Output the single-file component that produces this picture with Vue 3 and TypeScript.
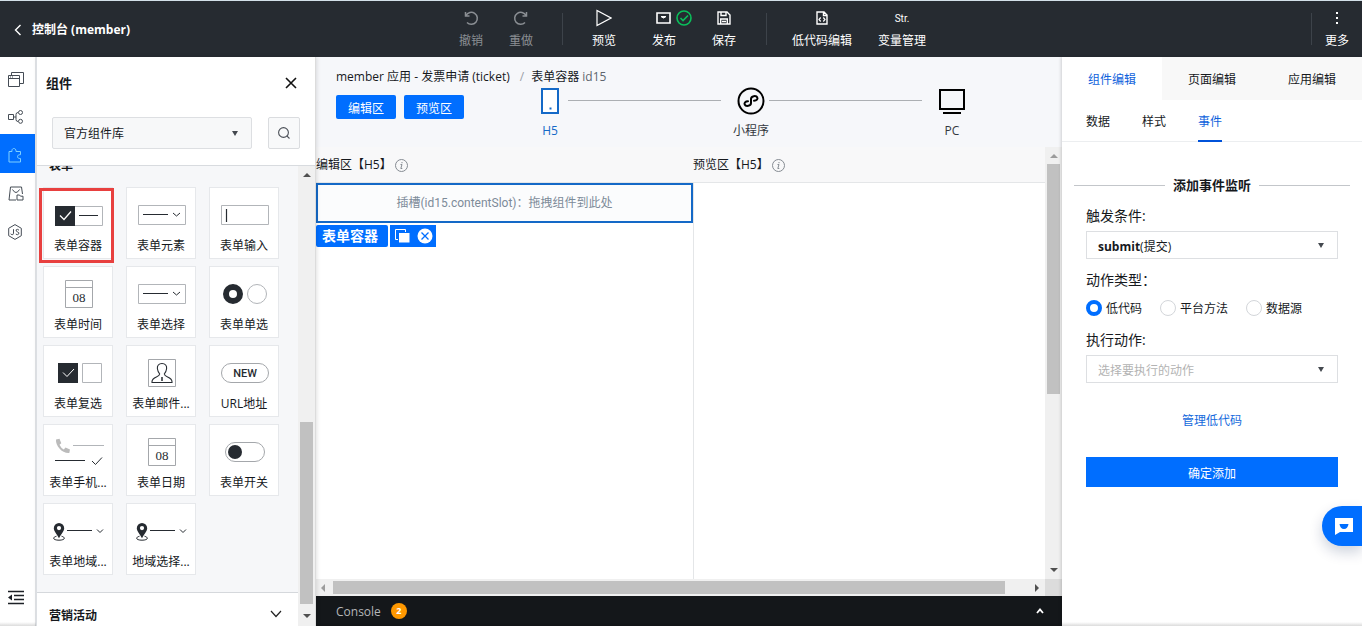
<script setup lang="ts">
import { ref } from 'vue'

interface Widget {
  kind: string
  label: string
}

const widgets: Widget[] = [
  { kind: 'container', label: '表单容器' },
  { kind: 'select', label: '表单元素' },
  { kind: 'input', label: '表单输入' },
  { kind: 'date', label: '表单时间' },
  { kind: 'select', label: '表单选择' },
  { kind: 'radio', label: '表单单选' },
  { kind: 'checkbox', label: '表单复选' },
  { kind: 'mail', label: '表单邮件...' },
  { kind: 'url', label: 'URL地址' },
  { kind: 'phone', label: '表单手机...' },
  { kind: 'date', label: '表单日期' },
  { kind: 'switch', label: '表单开关' },
  { kind: 'region', label: '表单地域...' },
  { kind: 'region', label: '地域选择...' },
]

const panelTabs: string[] = ['组件编辑', '页面编辑', '应用编辑']
const subTabs: string[] = ['数据', '样式', '事件']
const actionTypes: string[] = ['低代码', '平台方法', '数据源']

const activePanel = ref('组件编辑')
const activeSub = ref('事件')
const actionType = ref('低代码')
const library = ref('官方组件库')
const trigger = ref('submit')
const action = ref('')
</script>

<template>
  <div class="app">
    <header class="topbar">
      <button class="back" type="button">
        <svg width="8" height="12" viewBox="0 0 8 12"><path d="M6.500 1L1.500 6l5 5" fill="none" stroke="#fff" stroke-width="1.400" /></svg>
        <span>控制台 (member)</span>
      </button>
      <nav class="tools">
        <button class="tool dim" type="button">
          <svg width="16" height="16" viewBox="0 0 16 16" fill="none" stroke="currentColor" stroke-width="1.500"><path d="M2.500 2v4h4M3 5.500A6 6 0 1 1 4 12.500" /></svg>
          <span>撤销</span>
        </button>
        <button class="tool dim" type="button">
          <svg width="16" height="16" viewBox="0 0 16 16" fill="none" stroke="currentColor" stroke-width="1.500"><path d="M13.500 2v4h-4M13 5.500A6 6 0 1 0 12 12.500" /></svg>
          <span>重做</span>
        </button>
        <i class="sep wide-left"></i>
        <button class="tool mid" type="button">
          <svg width="16" height="18" viewBox="0 0 16 18" fill="none" stroke="currentColor" stroke-width="1.200"><path d="M1 1.500v15L15 9z" /></svg>
          <span>预览</span>
        </button>
        <button class="tool mid" type="button">
          <svg class="publish" width="36" height="16" viewBox="0 0 36 16" fill="none">
            <path d="M1 3h13v10H1z" stroke="#fff" stroke-width="1.600" />
            <path d="M5 6.500q2.500 3 5 0z" fill="#fff" stroke="#fff" />
            <circle cx="28" cy="8" r="7" stroke="#0abf5b" stroke-width="1.600" />
            <path d="M24.500 8l2.500 2.500L32 5.500" stroke="#0abf5b" stroke-width="1.600" />
          </svg>
          <span>发布</span>
        </button>
        <button class="tool mid" type="button">
          <svg width="14" height="14" viewBox="0 0 14 14" fill="none" stroke="currentColor" stroke-width="1.400"><path d="M1 1h9l3 3v9H1zM4 1v3.500h5V1M3.700 13V8h6.600v5M5 10.500h4" /></svg>
          <span>保存</span>
        </button>
        <i class="sep wide-right"></i>
        <button class="tool big" type="button">
          <svg width="12" height="14" viewBox="0 0 12 14" fill="none" stroke="currentColor" stroke-width="1.400"><path d="M1 1h7l3 3v9H1zM7.500 1v3.500H11" /><path d="M4.700 6.500L3 8.500l1.700 2M7.300 6.500L9 8.500l-1.700 2" stroke-width="1.200" /></svg>
          <span>低代码编辑</span>
        </button>
        <button class="tool big" type="button">
          <b class="str">Str.</b>
          <span>变量管理</span>
        </button>
      </nav>
      <div class="more-wrap">
        <i class="sep"></i>
        <button class="tool more" type="button">
          <svg width="4" height="14" viewBox="0 0 4 14" fill="#fff"><path d="M1 1h2v2H1zM1 6h2v2H1zM1 11h2v2H1z" /></svg>
          <span>更多</span>
        </button>
      </div>
    </header>

    <div class="body">
      <nav class="rail">
        <button type="button" aria-label="页面">
          <svg width="16" height="16" viewBox="0 0 16 16" fill="none" stroke="#454c55"><path d="M.5 4.500h11v11H.5zM.5 7.500h11M3.500 4.500v-3h12v11h-3.500M2 6h1M4 6h1" /></svg>
        </button>
        <button type="button" aria-label="流程">
          <svg width="16" height="14" viewBox="0 0 16 14" fill="none" stroke="#454c55"><path d="M.5 4.500h5v5h-5zM5.500 7h2.500M10 2.500Q8 2.500 8 4.500v5q0 2 2 2" /><circle cx="12.500" cy="2.500" r="2" /><circle cx="12.500" cy="11.300" r="2" /></svg>
        </button>
        <button class="active" type="button" aria-label="组件">
          <svg width="14" height="16" viewBox="0 0 14 16" fill="none" stroke="#7fd0ff"><path d="M1 4.500h3c-.8-4 4.500-4 4 0h4.500v3.200c-4-.5-4 4.300 0 3.800v3.500H1z" /></svg>
        </button>
        <button type="button" aria-label="素材">
          <svg width="16" height="15" viewBox="0 0 16 15" fill="none" stroke="#454c55"><path d="M8 14H1L2.500 1h11l1 7M4.500 3.500q3.500 6 7 0M9 14V9h2.500l1 1.200H15V14z" /></svg>
        </button>
        <button type="button" aria-label="脚本">
          <svg width="14" height="16" viewBox="0 0 14 16" fill="none" stroke="#454c55"><path d="M7 .6l6.300 3.700v7.400L7 15.400.7 11.700V4.300z" /><path d="M5.500 5.200v4q0 1.500-1.300 1.500-1.200 0-1.400-1M11 6.200Q9.500 4.700 8.200 5.800q-.7 1.300 1.200 2 2 .6 1.400 2.100-1.200 1.500-3 .2" /></svg>
        </button>
        <button class="collapse" type="button" aria-label="收起">
          <svg width="17" height="15" viewBox="0 0 17 15"><path d="M0 1.500h16M6 5.500h10M6 9.500h10M0 13.500h16" stroke="#1c2026" stroke-width="1.600" /><path d="M4 4.500v6L0 7.500z" fill="#1c2026" /></svg>
        </button>
      </nav>

      <aside class="library">
        <div class="lib-head">
          <div class="lib-title">
            <h2>组件</h2>
            <button type="button" aria-label="关闭">
              <svg width="12" height="12" viewBox="0 0 12 12"><path d="M1 1l10 10M11 1L1 11" stroke="#111" stroke-width="1.600" /></svg>
            </button>
          </div>
          <div class="lib-filter">
            <div class="pick grey">
              <select v-model="library" aria-label="组件库"><option>官方组件库</option></select>
              <i class="caret"></i>
            </div>
            <button type="button" aria-label="搜索">
              <svg width="12" height="12" viewBox="0 0 12 12" fill="none" stroke="#4b5058" stroke-width="1.100"><circle cx="5.500" cy="5.500" r="4.900" /><path d="M8.800 8.800l2.700 2.700" /></svg>
            </button>
          </div>
        </div>

        <div class="lib-scroll">
          <div class="lib-list">
            <section class="group">
              <h3>表单</h3>
              <div class="cards">
                <button v-for="(w, i) in widgets" :key="i" class="card" :class="{ marked: i === 0 }" type="button">
                  <svg width="70" height="50" viewBox="0 0 70 50" fill="none" stroke="#262b31">
                    <template v-if="w.kind === 'container'">
                      <path d="M32 19.500h27.500v19H32" stroke="#b2b5b9" />
                      <path d="M12 19h20v20H12z" fill="#262b31" stroke="none" />
                      <path d="M17 28.500l4 4 7-8" stroke="#fff" stroke-width="1.300" />
                      <path d="M36 28.500h19" />
                    </template>
                    <template v-else-if="w.kind === 'select'">
                      <path d="M12.500 18.500h47v19h-47z" stroke="#b2b5b9" />
                      <path d="M17 27.500h25M47 26l3.500 3 3.500-3" />
                    </template>
                    <template v-else-if="w.kind === 'input'">
                      <path d="M12.500 18.500h47v19h-47z" stroke="#b2b5b9" />
                      <path d="M17.500 22v13" stroke-width="1.200" />
                    </template>
                    <template v-else-if="w.kind === 'date'">
                      <path d="M22.500 14.500h27v27h-27zM22.500 21.500h27" stroke="#a4a7ab" />
                      <text x="36" y="36" class="day">08</text>
                    </template>
                    <template v-else-if="w.kind === 'radio'">
                      <circle cx="24" cy="28" r="7" stroke-width="6" />
                      <circle cx="48" cy="28" r="9.500" stroke="#b2b5b9" />
                    </template>
                    <template v-else-if="w.kind === 'checkbox'">
                      <path d="M15 18h20v20H15z" fill="#262b31" stroke="none" />
                      <path d="M20 27.500l4 4 7-7.500" stroke="#fff" />
                      <path d="M39.500 18.500h19v19h-19z" stroke="#b2b5b9" />
                    </template>
                    <template v-else-if="w.kind === 'mail'">
                      <path d="M22.500 14.500h27v27h-27z" stroke="#a4a7ab" />
                      <path d="M36 18.500c3.300 0 5 2.300 4.600 5.200-.3 2.600-1.300 4-2.300 5.300.2 3.700 7.700 2.200 7.700 7.800v.7H26v-.7c0-5.600 7.500-4.100 7.700-7.800-1-1.300-2-2.700-2.300-5.300-.4-2.900 1.300-5.200 4.600-5.200z" stroke-width="1.100" />
                      <path d="M36 32v4" stroke-width="1.500" />
                    </template>
                    <template v-else-if="w.kind === 'url'">
                      <rect x="12.500" y="18.500" width="47" height="19" rx="9.500" stroke="#a4a7ab" />
                      <text x="36" y="32" class="new">NEW</text>
                    </template>
                    <template v-else-if="w.kind === 'phone'">
                      <path d="M13 15.500l3.500-.8 1.800 4.500-1.800 1.500q1.500 3.300 4.300 4.800l1.700-2 4.500 2-.7 3.500C19 29.500 12.500 22 13 15.500z" fill="#bbb" stroke="none" />
                      <path d="M30 21.500h31" stroke="#b2b5b9" />
                      <path d="M12 36.500h30" />
                      <path d="M49 37l3.500 3.500 6.500-7" />
                    </template>
                    <template v-else-if="w.kind === 'switch'">
                      <rect x="16.500" y="18.500" width="39" height="19" rx="9.500" stroke="#a4a7ab" />
                      <circle cx="26" cy="28" r="7" fill="#262b31" stroke="none" />
                    </template>
                    <template v-else>
                      <path d="M13.500 33.200c-5 1.500-3 4 2.500 4s7.500-2.500 2.500-4" />
                      <path d="M16 20a5.200 5.200 0 0 1 5.200 5.200c0 3-3 5.500-5.200 10-2.200-4.500-5.200-7-5.200-10A5.200 5.200 0 0 1 16 20zm0 3a2.100 2.100 0 1 0 0 4.200 2.100 2.100 0 1 0 0-4.200z" fill="#262b31" stroke="none" />
                      <path d="M24 27.500h25M54 26.500l3 3 3-3" />
                    </template>
                  </svg>
                  <span>{{ w.label }}</span>
                </button>
              </div>
            </section>
            <button class="group-closed" type="button">
              <span>营销活动</span>
              <svg width="12" height="8" viewBox="0 0 12 8"><path d="M1 1l5 5.500L11 1" fill="none" stroke="#222" stroke-width="1.200" /></svg>
            </button>
          </div>
          <div class="vbar lib-bar">
            <i class="arrow up"></i>
            <i class="thumb"></i>
            <i class="arrow down"></i>
          </div>
        </div>
      </aside>

      <main class="stage">
        <div class="stage-head">
          <div class="crumbs">
            <span>member 应用 - 发票申请 (ticket)</span>
            <i>/</i>
            <span>表单容器 <em>id15</em></span>
          </div>
          <div class="stage-row">
            <div class="areas">
              <button type="button">编辑区</button>
              <button type="button">预览区</button>
            </div>
            <div class="steps">
              <button class="step on" type="button">
                <svg width="28" height="28" viewBox="0 0 28 28"><path d="M6 2h16v24H6z" fill="#fff" stroke="#1469c7" stroke-width="2" /><path d="M13.500 20.500h2v2h-2z" fill="#1469c7" /></svg>
                <span>H5</span>
              </button>
              <i class="line"></i>
              <button class="step" type="button">
                <svg width="28" height="28" viewBox="0 0 28 28" fill="none" stroke="#000" stroke-width="2"><circle cx="14" cy="14" r="12.500" /><path d="M11 14.300c-2.800 0-4 1.700-3.300 3.200 1 2.300 6.300 1.800 6.300-1.500v-4c0-3.300 5.300-3.800 6.300-1.500.7 1.500-.5 3.200-3.300 3.200" stroke-linecap="round" /></svg>
                <span>小程序</span>
              </button>
              <i class="line"></i>
              <button class="step" type="button">
                <svg width="28" height="28" viewBox="0 0 28 28" fill="none" stroke="#000" stroke-width="2"><path d="M2 3h24v19H2zM5 26h18" /></svg>
                <span>PC</span>
              </button>
            </div>
          </div>
        </div>

        <div class="view">
          <div class="panes">
            <section class="pane">
              <div class="pane-title">
                <span>编辑区【H5】</span>
                <svg width="13" height="13" viewBox="0 0 13 13" fill="none" stroke="#858b92"><circle cx="6.500" cy="6.500" r="6" /><path d="M5.500 5.500h1.500l-1.200 4h1.500M7 3v1.200" /></svg>
              </div>
              <div class="sheet">
                <div class="slot">插槽(id15.contentSlot)：拖拽组件到此处</div>
                <div class="slot-bar">
                  <b>表单容器</b>
                  <div class="slot-acts">
                    <button type="button" aria-label="复制">
                      <svg width="15" height="14" viewBox="0 0 15 14"><path d="M10.500 3V.5H.5v10H3" fill="none" stroke="#fff" /><path d="M4 4h10.500v9.500H4z" fill="#fff" /></svg>
                    </button>
                    <button type="button" aria-label="删除">
                      <svg width="16" height="16" viewBox="0 0 16 16"><circle cx="8" cy="8" r="7.500" fill="#fff" /><path d="M4.500 4.500l7 7M11.500 4.500l-7 7" stroke="#006eff" stroke-width="1.300" /></svg>
                    </button>
                  </div>
                </div>
              </div>
            </section>
            <section class="pane second">
              <div class="pane-title">
                <span>预览区【H5】</span>
                <svg width="13" height="13" viewBox="0 0 13 13" fill="none" stroke="#858b92"><circle cx="6.500" cy="6.500" r="6" /><path d="M5.500 5.500h1.500l-1.200 4h1.500M7 3v1.200" /></svg>
              </div>
              <div class="sheet"></div>
            </section>
          </div>
          <div class="vbar view-bar">
            <i class="arrow up pale"></i>
            <i class="thumb"></i>
            <i class="arrow down"></i>
          </div>
          <div class="hbar">
            <i class="arrow left pale"></i>
            <i class="thumb"></i>
            <i class="arrow right"></i>
          </div>
          <div class="corner"></div>
        </div>

        <button class="console" type="button">
          <span>Console</span>
          <b>2</b>
          <svg width="8" height="6" viewBox="0 0 8 6"><path d="M1 5l3-3.500L7 5" fill="none" stroke="#fff" stroke-width="1.800" /></svg>
        </button>
      </main>

      <aside class="inspector">
        <div class="tabs">
          <button v-for="t in panelTabs" :key="t" type="button" :class="{ on: t === activePanel }" @click="activePanel = t">{{ t }}</button>
        </div>
        <div class="subtabs">
          <button v-for="t in subTabs" :key="t" type="button" :class="{ on: t === activeSub }" @click="activeSub = t">{{ t }}</button>
        </div>
        <h3 class="legend">添加事件监听</h3>
        <form class="form" @submit.prevent>
          <label class="name" for="trigger">触发条件:</label>
          <div class="pick">
            <select id="trigger" v-model="trigger" class="rich"><option value="submit" label="submit(提交)"></option></select>
            <span class="shown" aria-hidden="true"><b>submit</b>(提交)</span>
            <i class="caret"></i>
          </div>
          <span class="name">动作类型：</span>
          <div class="radios">
            <label v-for="a in actionTypes" :key="a">
              <input v-model="actionType" type="radio" name="action-type" :value="a">
              <span>{{ a }}</span>
            </label>
          </div>
          <label class="name" for="action">执行动作:</label>
          <div class="pick empty">
            <select id="action" v-model="action"><option value="">选择要执行的动作</option></select>
            <i class="caret"></i>
          </div>
          <a class="manage" href="#">管理低代码</a>
          <button class="confirm" type="submit">确定添加</button>
        </form>
      </aside>
    </div>

    <button class="chat" type="button" aria-label="客服">
      <svg width="18" height="17" viewBox="0 0 18 17"><path d="M0 0h18v14H5l-5 3z" fill="#fff" /><path d="M4.500 6h9q-.8 5-4.500 5t-4.500-5z" fill="#006eff" /></svg>
    </button>
  </div>
</template>

<style>
body {
  margin: 0;
  overflow: hidden;
}
</style>

<style scoped>
*,
*::before,
*::after {
  box-sizing: border-box;
}

.app {
  position: relative;
  display: flex;
  flex-direction: column;
  height: 100vh;
  overflow: hidden;
  border-top: 1px solid #d3e0e8;
  background: #fff;
  color: #16191d;
  font: 12px/20px "Open Sans", "Noto Sans CJK SC", sans-serif;
}

.app::after {
  content: "";
  position: absolute;
  right: 0;
  bottom: 0;
  left: 0;
  height: 4px;
  background: linear-gradient(rgba(0, 0, 0, 0), rgba(0, 0, 0, 0.14));
  pointer-events: none;
}

button,
select {
  margin: 0;
  padding: 0;
  border: 0;
  background: none;
  color: inherit;
  font: inherit;
}

svg {
  display: block;
  flex: none;
}

/* top bar */
.topbar {
  display: grid;
  grid-template-columns: 1fr auto 1fr;
  flex: none;
  height: 56px;
  background: #262b31;
  color: #fff;
}

.back {
  display: flex;
  align-items: center;
  justify-self: start;
  gap: 10px;
  padding: 2px 0 0 14px;
  font-weight: 700;
}

.tools {
  display: flex;
  align-items: center;
  padding-left: 26px;
}

.tool {
  display: flex;
  flex-direction: column;
  align-items: center;
  height: 56px;
  padding-top: 8px;
  width: 50px;
  white-space: nowrap;
}

.tool > svg,
.str {
  height: 18px;
}

.tool > span {
  margin-top: 4px;
}

.tool.dim {
  color: #8b8f94;
}

.tool.mid {
  width: 60px;
}

.tool.big {
  width: 80px;
}

.publish {
  margin-left: 20px;
}

.str {
  font: 400 10px/20px Roboto, sans-serif;
}

.sep {
  width: 1px;
  height: 32px;
  background: #3d434a;
}

.wide-left {
  margin: 0 11px 0 16px;
}

.wide-right {
  margin: 0 15px 0 12px;
}

.more-wrap {
  display: flex;
  align-items: center;
  justify-self: end;
}

/* body */
.body {
  display: flex;
  flex: 1;
  min-height: 0;
}

.rail {
  display: flex;
  flex: none;
  flex-direction: column;
  width: 36px;
  padding-top: 1px;
  border-right: 1px solid #e3e5e8;
}

.rail button {
  display: flex;
  align-items: center;
  height: 38px;
  padding: 3px 0 0 8px;
}

.rail .active {
  height: 39px;
  background: #006eff;
}

.rail .collapse {
  margin-top: auto;
  margin-bottom: 11px;
}

.library {
  z-index: 1;
  display: flex;
  flex: none;
  flex-direction: column;
  width: 280px;
  border-left: 1px solid #dcdfe3;
  border-right: 1px solid #dcdcdc;
  box-shadow: 1px 0 4px rgba(0, 0, 0, 0.12);
  background: #fff;
}

.lib-head {
  flex: none;
  height: 109px;
  padding: 16px 15px 0 15px;
  border-bottom: 1px solid #d8dbdf;
}

.lib-title {
  display: flex;
  align-items: center;
  justify-content: space-between;
  margin: 0 3px 0 -6px;
}

.lib-title h2 {
  margin: 0;
  font-size: 13px;
  line-height: 20px;
}

.lib-filter {
  display: flex;
  justify-content: space-between;
  gap: 16px;
  margin-top: 24px;
}

.lib-filter > button {
  display: flex;
  flex: none;
  align-items: center;
  justify-content: center;
  width: 32px;
  height: 32px;
  border: 1px solid #dadcdf;
  border-radius: 2px;
  background: #f8f9fa;
}

.pick {
  position: relative;
  display: flex;
  flex: 1;
  height: 28px;
}

.pick select {
  flex: 1;
  min-width: 0;
  padding: 4px 11px 0;
  border: 1px solid #dddfe2;
  background: #fff;
  appearance: none;
}

.pick.grey {
  height: 32px;
}

.pick.grey select {
  padding-top: 2px;
  border-radius: 2px;
  background: #f7f8f9;
}

.pick.empty select {
  color: #b3b3b3;
}

.pick select.rich {
  color: transparent;
}

.shown {
  position: absolute;
  top: 6px;
  left: 12px;
  pointer-events: none;
}

.caret {
  position: absolute;
  top: 12px;
  right: 14px;
  border: solid transparent;
  border-width: 5px 3px 0;
  border-top-color: #44494f;
  pointer-events: none;
}

.pick.grey .caret {
  top: 14px;
}

.lib-scroll {
  display: flex;
  flex: 1;
  min-height: 0;
}

.lib-list {
  flex: 1;
  min-width: 0;
  overflow: hidden;
  background: #f6f7f9;
}

.group {
  padding: 0 6px 17px;
  border-bottom: 1px solid #d5d8dc;
}

.group h3 {
  margin: -10px 0 0 6px;
  padding-bottom: 11px;
  font-size: 12px;
  line-height: 20px;
}

.cards {
  display: grid;
  grid-template-columns: repeat(3, 70px);
  gap: 7px 13px;
}

.card {
  position: relative;
  display: flex;
  flex-direction: column;
  align-items: center;
  height: 72px;
  background: #fff;
  box-shadow: inset 0 0 0 1px #e6e8eb;
  white-space: nowrap;
}

.card > span {
  margin-top: -1px;
}

.marked {
  z-index: 1;
}

.marked::after {
  content: "";
  position: absolute;
  top: 1px;
  left: -4px;
  width: 75px;
  height: 75px;
  border: 3px solid #e8403f;
}

.day {
  font: 13px "Liberation Serif", serif;
  fill: #262b31;
  stroke: none;
  text-anchor: middle;
}

.new {
  font: 500 11px Roboto, sans-serif;
  fill: #262b31;
  stroke: none;
  text-anchor: middle;
}

.group-closed {
  display: flex;
  align-items: center;
  justify-content: space-between;
  width: 100%;
  height: 45px;
  padding: 0 16px 4px 12px;
  background: #fff;
  font-weight: 700;
}

.group-closed span {
  padding-top: 4px;
}

/* drawn scroll bars */
.vbar {
  display: flex;
  flex-direction: column;
  align-items: center;
  background: #f0f0f0;
}

.thumb {
  background: #c1c1c1;
}

.arrow {
  flex: none;
  border: 4px solid transparent;
}

.arrow.up {
  border-top: 0;
  border-bottom-color: #505050;
}

.arrow.down {
  border-bottom: 0;
  border-top-color: #505050;
}

.arrow.left {
  border-left: 0;
  border-right-color: #505050;
}

.arrow.right {
  border-right: 0;
  border-left-color: #505050;
}

.arrow.up.pale {
  border-bottom-color: #9c9c9c;
}

.arrow.left.pale {
  border-right-color: #9c9c9c;
}

.lib-bar {
  flex: none;
  width: 17px;
  padding: 7px 0 8px;
}

.lib-bar .thumb {
  width: 13px;
  height: 41%;
  margin: auto 0 10px;
}

/* stage */
.stage {
  display: flex;
  flex: 1;
  flex-direction: column;
  min-width: 0;
}

.stage-head {
  flex: none;
  height: 90px;
  padding: 10px 92px 0 20px;
  background: #f6f7fa;
}

.crumbs {
  display: flex;
}

.crumbs i {
  margin: 0 7px 0 10px;
  color: #9aa0a6;
  font-style: normal;
}

.crumbs em {
  color: #5e656d;
  font-style: normal;
}

.stage-row {
  display: flex;
  gap: 68px;
}

.areas {
  display: flex;
  gap: 8px;
  padding-top: 8px;
}

.areas button {
  width: 60px;
  height: 24px;
  padding-top: 3px;
  border-radius: 2px;
  background: #006eff;
  color: #fff;
}

.steps {
  display: flex;
  flex: 1;
}

.step {
  display: flex;
  flex-direction: column;
  align-items: center;
  width: 36px;
  color: #33383e;
  white-space: nowrap;
}

.step span {
  margin-top: 6px;
}

.step.on {
  color: #1469c7;
}

.line {
  flex: 1;
  height: 1px;
  margin: 13px 12px 0 0;
  background: #acafb3;
}

.view {
  display: grid;
  grid-template-rows: 1fr 17px;
  grid-template-columns: 1fr 17px;
  flex: 1;
  min-height: 0;
}

.panes {
  display: grid;
  grid-template-columns: 377fr 352fr;
}

.pane {
  display: flex;
  flex-direction: column;
  min-width: 0;
}

.pane-title {
  display: flex;
  align-items: center;
  gap: 3px;
  height: 36px;
  padding-top: 1px;
  border-bottom: 1px solid #e4e6e8;
  background: #f8f8f9;
}

.sheet {
  flex: 1;
}

.second .sheet {
  border-left: 1px solid #e4e6e8;
}

.slot {
  display: flex;
  align-items: center;
  justify-content: center;
  height: 40px;
  border: 2px solid #1469c7;
  background: #fbfcfd;
  color: #7d8b99;
  font-family: Roboto, "Noto Sans CJK SC", sans-serif;
}

.slot-bar {
  display: flex;
  gap: 2px;
  margin-top: 2px;
  color: #fff;
}

.slot-bar b {
  padding: 1px 10px 1px 6px;
  border-radius: 2px;
  background: #006eff;
  font-size: 14px;
}

.slot-acts {
  display: flex;
  align-items: center;
  gap: 7px;
  padding: 0 3px 0 5px;
  background: #006eff;
}

.view-bar {
  padding: 7px 0;
}

.view-bar .thumb {
  width: 13px;
  height: 230px;
  margin: 6px 0 auto;
}

.hbar {
  display: flex;
  align-items: center;
  padding: 0 6px 0 5px;
  background: #f0f0f0;
}

.hbar .thumb {
  flex: 1;
  height: 13px;
  margin: 0 30px 0 8px;
}

.corner {
  background: #dcdcdc;
}

.console {
  display: flex;
  flex: none;
  align-items: center;
  height: 30px;
  padding: 0 18px 0 20px;
  background: #14171a;
  color: #b4b6b8;
}

.console span {
  padding-top: 2px;
}

.console b {
  width: 16px;
  height: 16px;
  margin: 0 auto 0 10px;
  border-radius: 50%;
  background: #ff9800;
  color: #fff;
  font-size: 9px;
  line-height: 16px;
}

/* inspector */
.inspector {
  flex: none;
  width: 300px;
  box-shadow: -1px 0 3px rgba(0, 0, 0, 0.16);
  background: #fff;
}

.tabs {
  display: flex;
}

.tabs button {
  flex: 1;
  height: 43px;
  padding-top: 2px;
  background: #f8f8f8;
}

.tabs .on {
  background: #fff;
  color: #0f62dc;
}

.subtabs {
  display: flex;
  gap: 32px;
  height: 42px;
  padding-left: 24px;
  border-bottom: 1px solid #eceef0;
}

.subtabs button {
  height: 42px;
  padding-top: 4px;
  border-bottom: 2px solid transparent;
}

.subtabs .on {
  border-color: #0052d9;
  color: #0f62dc;
}

.legend {
  display: flex;
  align-items: center;
  gap: 8px;
  margin: 33px 12px 0;
  font-size: 13px;
  line-height: 20px;
}

.legend::before,
.legend::after {
  content: "";
  flex: 1;
  height: 1px;
  background: #c3c6ca;
}

.form {
  display: flex;
  flex-direction: column;
  padding: 11px 24px 0;
}

.form .pick {
  flex: none;
}

.name {
  margin-bottom: 5px;
  font-size: 14px;
  line-height: 20px;
}

.pick + .name {
  margin-top: 11px;
}

.radios {
  display: flex;
  gap: 18px;
  height: 20px;
  margin: 3px 0 12px;
}

.radios label {
  display: flex;
  align-items: center;
  gap: 4px;
}

.radios span {
  padding-top: 2px;
}

.radios input {
  width: 16px;
  height: 16px;
  margin: 0;
  border: 1px solid #d3d6da;
  border-radius: 50%;
  appearance: none;
}

.radios input:checked {
  border: 4px solid #006eff;
}

.manage {
  align-self: center;
  margin: 28px 0 26px;
  color: #1469dc;
  text-decoration: none;
}

.confirm {
  height: 30px;
  padding-top: 4px;
  background: #006eff;
  color: #fff;
}

.chat {
  position: absolute;
  right: 0;
  bottom: 80px;
  display: flex;
  align-items: center;
  width: 40px;
  height: 40px;
  padding-left: 13px;
  border-radius: 20px 0 0 20px;
  background: #006eff;
  box-shadow: 0 6px 14px rgba(0, 30, 80, 0.2);
}
</style>
